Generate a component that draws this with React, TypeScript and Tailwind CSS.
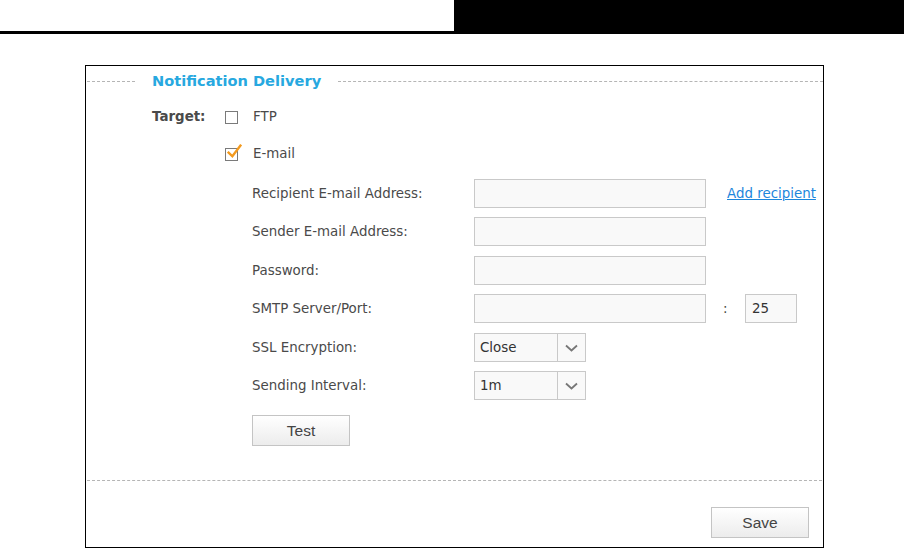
import React from 'react';

const font = "font-['DejaVu_Sans',Verdana,sans-serif]";

function Checkbox({ checked }: { checked?: boolean }) {
  return (
    <span className="relative inline-block h-[13px] w-[13px] border border-[#7a7a7a] bg-white">
      {checked && (
        <svg
          className="absolute left-[1px] top-[-5px]"
          width="15"
          height="15"
          viewBox="0 0 14 14"
          fill="none"
        >
          <path d="M1.5 8 L5 11.5 L12.5 1.5" stroke="#f39a1e" strokeWidth="2.2" strokeLinecap="square" />
        </svg>
      )}
    </span>
  );
}

function TextBox({ className = 'w-[232px]', value = '' }: { className?: string; value?: string }) {
  return (
    <div
      className={`flex h-[29px] items-center border border-[#c9c9c9] bg-[#f9f9f9] px-[6px] pt-[2px] text-[13.4px] text-[#333] ${className}`}
    >
      {value}
    </div>
  );
}

function Select({ value }: { value: string }) {
  return (
    <div className="flex h-[29px] w-[112px] items-stretch border border-[#c9c9c9] bg-[#f9f9f9] text-[13.4px] text-[#333]">
      <span className="flex flex-1 items-center px-[5px] pt-[2px]">{value}</span>
      <span className="flex w-[28px] items-center justify-center border-l border-[#c9c9c9]">
        <svg width="13" height="8" viewBox="0 0 13 8" fill="none">
          <path d="M1 1.5 L6.5 6.5 L12 1.5" stroke="#777" strokeWidth="1.8" />
        </svg>
      </span>
    </div>
  );
}

function FieldRow({ label, children, className = '' }: { label: string; children: React.ReactNode; className?: string }) {
  return (
    <div className={`flex items-center ${className}`}>
      <span className="w-[222px] pt-[2px] text-[13.4px] text-[#4a4a4a]">{label}</span>
      {children}
    </div>
  );
}

function Button({ label }: { label: string }) {
  return (
    <button
      type="button"
      className="h-[31px] w-[98px] border border-[#c4c4c4] bg-gradient-to-b from-white to-[#ececec] font-['Liberation_Sans',Arial,sans-serif] text-[15.5px] text-[#444]"
    >
      {label}
    </button>
  );
}

export default function App() {
  return (
    <div className={`h-[548px] w-[904px] bg-white ${font}`}>
      <div className="flex h-[34px]">
        <div className="w-[454px] border-b-[3px] border-black" />
        <div className="flex-1 bg-black" />
      </div>

      <div className="ml-[85px] mt-[31px] flex h-[483px] w-[739px] flex-col border border-black">
        <div className="flex h-[30px] items-center">
          <div className="ml-[1px] w-[48px] border-t border-dashed border-[#b5b5b5]" />
          <h2 className="px-[17px] text-[14.6px] font-bold text-[#27a8e0]">Notification Delivery</h2>
          <div className="flex-1 border-t border-dashed border-[#b5b5b5]" />
        </div>

        <div className="mt-[1px] flex h-[38px] items-center pl-[66px] pt-[2px]">
          <span className="w-[73px] text-[13.4px] font-bold text-[#4a4a4a]">Target:</span>
          <Checkbox />
          <span className="ml-[15px] text-[13.4px] text-[#4a4a4a]">FTP</span>
        </div>

        <div className="flex h-[36px] items-center pl-[139px] pt-[2px]">
          <Checkbox checked />
          <span className="ml-[15px] text-[13.4px] text-[#4a4a4a]">E-mail</span>
        </div>

        <div className="mt-[8px] flex flex-col pl-[166px]">
          <FieldRow label="Recipient E-mail Address:">
            <TextBox />
            <a href="#" className="ml-[21px] pt-[2px] text-[13.4px] text-[#1c86dc] underline">
              Add recipient
            </a>
          </FieldRow>
          <FieldRow label="Sender E-mail Address:" className="mt-[9px]">
            <TextBox />
          </FieldRow>
          <FieldRow label="Password:" className="mt-[10px]">
            <TextBox />
          </FieldRow>
          <FieldRow label="SMTP Server/Port:" className="mt-[9px]">
            <TextBox />
            <span className="ml-[17px] w-[22px] pt-[2px] text-[13.4px] text-[#4a4a4a]">:</span>
            <TextBox className="w-[52px]" value="25" />
          </FieldRow>
          <FieldRow label="SSL Encryption:" className="mt-[10px]">
            <Select value="Close" />
          </FieldRow>
          <FieldRow label="Sending Interval:" className="mt-[9px]">
            <Select value="1m" />
          </FieldRow>
          <div className="mt-[15px]">
            <Button label="Test" />
          </div>
        </div>

        <div className="mx-[1px] mt-[34px] border-t border-dashed border-[#b5b5b5]" />

        <div className="mt-[26px] flex justify-end pr-[14px]">
          <Button label="Save" />
        </div>
      </div>
    </div>
  );
}
